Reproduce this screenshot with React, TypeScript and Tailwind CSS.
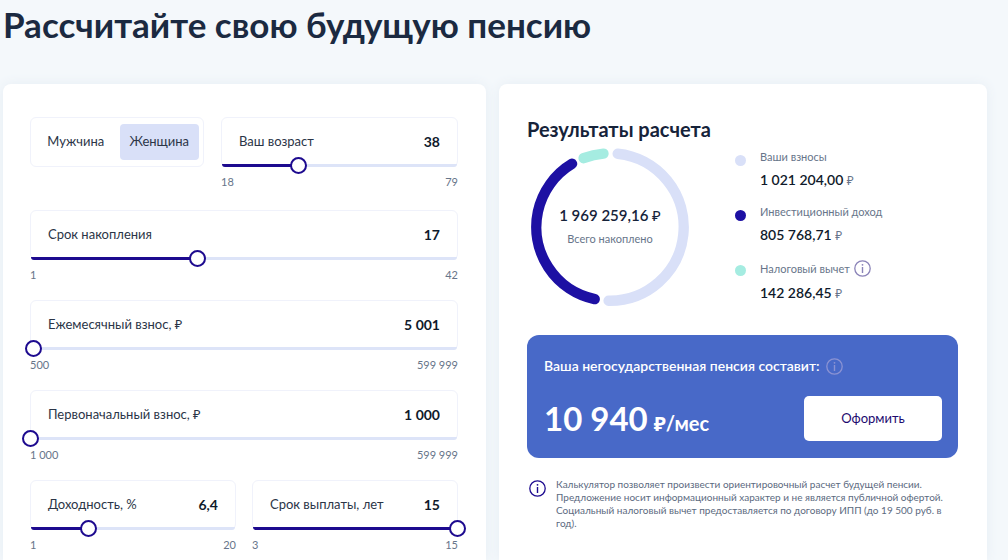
import { useState } from 'react';

interface SliderFieldProps {
  id: string;
  label: string;
  min: number;
  max: number;
  step?: number;
  initial: number;
}

interface LegendItem {
  label: string;
  value: string;
  dot: string;
  hint?: string;
}

interface Arc {
  color: string;
  start: number;
  end: number;
}

const legend: LegendItem[] = [
  { label: 'Ваши взносы', value: '1 021 204,00', dot: 'bg-[#d9e0f8]' },
  { label: 'Инвестиционный доход', value: '805 768,71', dot: 'bg-[#1d10a3]' },
  { label: 'Налоговый вычет', value: '142 286,45', dot: 'bg-[#a5ece1]', hint: 'О налоговом вычете' },
];

// angles in degrees, clockwise from the top
const arcs: Arc[] = [
  { color: '#d9e0f8', start: 6, end: 181 },
  { color: '#1d10a3', start: 192, end: 329 },
  { color: '#a5ece1', start: 339, end: 355 },
];

const formatNumber = (n: number) =>
  String(n)
    .replace('.', ',')
    .replace(/\B(?=(\d{3})+(?!\d))/g, ' ');

function InfoIcon({ className }: { className: string }) {
  return (
    <svg viewBox="0 0 17 17" fill="none" stroke="currentColor" className={`size-[17px] shrink-0 ${className}`} aria-hidden="true">
      <circle cx="8.5" cy="8.5" r="7.7" strokeWidth="1.3" />
      <path d="M8.5 7v6" strokeWidth="1.4" />
      <circle cx="8.5" cy="4.8" r="0.9" fill="currentColor" stroke="none" />
    </svg>
  );
}

function SliderField({ id, label, min, max, step = 1, initial }: SliderFieldProps) {
  const [value, setValue] = useState(initial);
  const percent = ((value - min) / (max - min)) * 100;

  const handleText = (text: string) => {
    const parsed = Number(text.replace(/\s/g, '').replace(',', '.'));
    if (!Number.isNaN(parsed)) setValue(Math.min(max, parsed));
  };

  return (
    <div className="min-w-0">
      <div className="relative flex h-[50px] items-center justify-between rounded-md border border-[#f0f2fb] px-[17px]">
        <label htmlFor={id} className="whitespace-nowrap text-[13px] text-[#2b3547]">
          {label}
        </label>
        <input
          type="text"
          inputMode="decimal"
          aria-label={`${label}, значение`}
          value={formatNumber(value)}
          onChange={(e) => handleText(e.target.value)}
          className="w-16 min-w-0 bg-transparent text-right text-sm font-bold text-[#0f1a2b] outline-none"
        />
        <div className="absolute inset-x-0 -bottom-px h-[3px] overflow-hidden rounded-b-md bg-[#dde4f8]">
          <div className="h-full bg-[#1d0a8f]" style={{ width: `${percent}%` }} />
        </div>
        <input
          id={id}
          type="range"
          min={min}
          max={max}
          step={step}
          value={value}
          onChange={(e) => setValue(Number(e.target.value))}
          className="absolute -inset-x-[9px] -bottom-2 h-[17px] cursor-pointer appearance-none bg-transparent outline-none [&::-webkit-slider-thumb]:size-[17px] [&::-webkit-slider-thumb]:appearance-none [&::-webkit-slider-thumb]:rounded-full [&::-webkit-slider-thumb]:border-2 [&::-webkit-slider-thumb]:border-[#1d0a8f] [&::-webkit-slider-thumb]:bg-white"
        />
      </div>
      <div className="mt-[7px] flex justify-between text-[11px] leading-4 text-[#67758a]">
        <span>{formatNumber(min)}</span>
        <span>{formatNumber(max)}</span>
      </div>
    </div>
  );
}

function GenderSwitch() {
  const [gender, setGender] = useState('Женщина');

  return (
    <div
      role="radiogroup"
      aria-label="Пол"
      className="flex h-[50px] items-center gap-1 rounded-md border border-[#f0f2fb] pr-1 pl-[5px]"
    >
      {['Мужчина', 'Женщина'].map((name) => (
        <label
          key={name}
          className="relative flex h-9 flex-1 cursor-pointer items-center justify-center rounded-sm text-[13px] text-[#2b3547] has-checked:bg-[#d9e0f8]"
        >
          <input
            type="radio"
            name="gender"
            value={name}
            checked={gender === name}
            onChange={() => setGender(name)}
            className="absolute inset-0 cursor-pointer appearance-none"
          />
          {name}
        </label>
      ))}
    </div>
  );
}

function Donut() {
  return (
    <div className="grid size-40 shrink-0 place-items-center">
      <svg viewBox="0 0 160 160" className="col-start-1 row-start-1 size-40" aria-hidden="true">
        {arcs.map((arc) => (
          <circle
            key={arc.color}
            cx="80"
            cy="80"
            r="73.7"
            fill="none"
            stroke={arc.color}
            strokeWidth="10.4"
            strokeLinecap="round"
            pathLength={360}
            strokeDasharray={`${arc.end - arc.start} 360`}
            transform={`rotate(${arc.start - 90} 80 80)`}
          />
        ))}
      </svg>
      <div className="col-start-1 row-start-1 flex flex-col items-center gap-1 text-center">
        <p className="whitespace-nowrap text-[15px] leading-5 font-semibold text-[#16233a]">
          1 969 259,16 <span className="font-normal">₽</span>
        </p>
        <p className="text-[11px] leading-5 text-[#67758a]">Всего накоплено</p>
      </div>
    </div>
  );
}

export default function App() {
  return (
    <div className="flex min-h-screen flex-col bg-[#f4f8fb] pt-1 pr-[21px] pl-[3px] font-[Lato,'Noto_Sans',sans-serif]">
      <h1 className="mb-10 text-[35px] leading-10 font-bold text-[#1b2a41]">Рассчитайте свою будущую пенсию</h1>

      <main className="grid flex-1 grid-cols-[483fr_488fr] gap-[13px]">
        <form className="flex flex-col rounded-t-lg bg-white pt-[33px] pr-7 pl-[27px] shadow-[0_0_12px_#e6edf4]">
          <div className="mb-5 grid grid-cols-[174fr_237fr] gap-[17px]">
            <GenderSwitch />
            <SliderField id="age" label="Ваш возраст" min={18} max={79} initial={38} />
          </div>
          <div className="flex flex-col gap-[17px]">
            <SliderField id="term" label="Срок накопления" min={1} max={42} initial={17} />
            <SliderField id="monthly" label="Ежемесячный взнос, ₽" min={500} max={599999} initial={5001} />
            <SliderField id="first" label="Первоначальный взнос, ₽" min={1000} max={599999} initial={1000} />
            <div className="grid grid-cols-2 gap-4">
              <SliderField id="yield" label="Доходность, %" min={1} max={20} step={0.1} initial={6.4} />
              <SliderField id="payout" label="Срок выплаты, лет" min={3} max={15} initial={15} />
            </div>
          </div>
        </form>

        <section className="rounded-t-lg bg-white pt-[33px] pr-[29px] pl-7 shadow-[0_0_12px_#e6edf4]">
          <h2 className="text-xl leading-6 font-bold text-[#16233a]">Результаты расчета</h2>

          <div className="mt-1.5 flex gap-[45px] pl-[3px]">
            <Donut />
            <ul className="flex flex-col gap-[13px] pt-px">
              {legend.map((item) => (
                <li key={item.label} className="flex gap-[14px]">
                  <span className={`mt-[7px] size-[11px] shrink-0 rounded-full ${item.dot}`} />
                  <div>
                    <div className="flex items-center gap-0.5 text-[11px] leading-[18px] text-[#67758a]">
                      {item.label}
                      {item.hint && (
                        <button type="button" aria-label={item.hint} className="p-0.5">
                          <InfoIcon className="text-[#8a83b8]" />
                        </button>
                      )}
                    </div>
                    <p className="mt-1 text-sm leading-5 font-semibold text-[#0f1a2b]">
                      {item.value} <span className="text-xs font-normal text-[#67758a]">₽</span>
                    </p>
                  </div>
                </li>
              ))}
            </ul>
          </div>

          <div className="mt-7 rounded-xl bg-[#4869c8] pt-[21px] pr-4 pb-[17px] pl-[17px] text-white">
            <div className="flex h-5 items-center gap-1 text-sm font-semibold">
              Ваша негосударственная пенсия составит:
              <button type="button" aria-label="О расчете пенсии" className="p-0.5">
                <InfoIcon className="text-[#8b93d3]" />
              </button>
            </div>
            <div className="mt-5 flex items-center justify-between">
              <p className="flex items-baseline gap-1.5 text-[33px] leading-[45px] font-bold">
                10 940 <span className="text-xl">₽/мес</span>
              </p>
              <button type="button" className="h-[45px] w-[138px] rounded-[5px] bg-white text-[13px] text-[#1d0a6f]">
                Оформить
              </button>
            </div>
          </div>

          <div className="mt-5 flex gap-2.5 pl-0.5">
            <InfoIcon className="mt-0.5 text-[#1d0a8f]" />
            <p className="text-[10px] leading-[13px] text-[#5b6a80]">
              Калькулятор позволяет произвести ориентировочный расчет будущей пенсии. Предложение носит информационный
              характер и не является публичной офертой. Социальный налоговый вычет предоставляется по договору ИПП (до
              19 500 руб. в год).
            </p>
          </div>
        </section>
      </main>
    </div>
  );
}
